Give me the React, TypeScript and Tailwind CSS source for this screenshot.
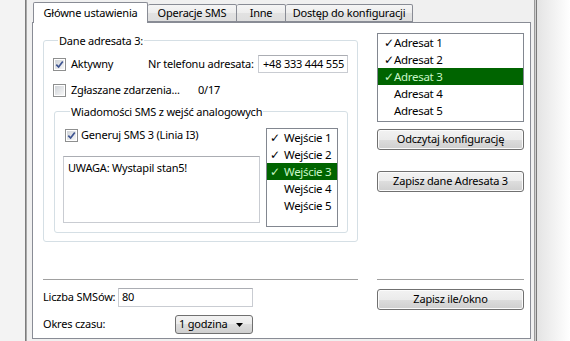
import type { ReactNode } from "react";

const CheckBox = ({ on = false }: { on?: boolean }) => (
  <span className="inline-flex w-[13px] h-[13px] shrink-0 border border-[#8e8f8f] bg-white p-px">
    <span className="flex w-full h-full items-center justify-center bg-linear-to-br from-[#cfd3d8] to-[#f7f7f7]">
      {on && (
        <svg width="9" height="9" viewBox="0 0 9 9">
          <path d="M1.3 4.6 L3.6 7 L7.8 1.4" fill="none" stroke="#3e5491" strokeWidth="1.7" />
        </svg>
      )}
    </span>
  </span>
);

const Button = ({ children, className = "" }: { children: ReactNode; className?: string }) => (
  <button
    className={`h-[21px] w-full rounded-[3px] border border-[#707070] bg-[linear-gradient(#f2f2f2,#ebebeb_50%,#dddddd_50%,#cfcfcf)] shadow-[inset_0_0_0_1px_#fbfbfb] text-black ${className}`}
  >
    {children}
  </button>
);

interface ListProps {
  items: string[];
  checked: number[];
  selected: number;
  wide?: boolean;
}

// listbox items with a check column, one row selected in green
const CheckList = ({ items, checked, selected, wide = false }: ListProps) => (
  <div
    className={
      wide
        ? "w-full h-[89px] border border-[#828790] bg-white"
        : "w-[72px] h-[99px] shrink-0 border border-[#828790] bg-white"
    }
  >
    {items.map((it, i) => (
      <div
        key={it}
        className={`flex h-[17px] items-center text-[11.5px] tracking-[-0.3px] ${wide ? "pl-[6px]" : "pl-[3px]"} ${
          i === selected ? "bg-[#006400] text-[#c9f7c9]" : "text-black"
        }`}
      >
        <span className={`${wide ? "w-[10px]" : "w-[14px]"} font-['DejaVu_Sans',sans-serif] text-[12px] leading-none`}>
          {checked.includes(i) ? "✓" : ""}
        </span>
        <span>{it}</span>
      </div>
    ))}
  </div>
);

const tabs = ["Operacje SMS", "Inne", "Dostęp do konfiguracji"];
const tabW = ["w-[89px]", "w-[49px]", "w-[127px]"];

export default function App() {
  return (
    <div className="flex w-[570px] h-[341px] overflow-hidden bg-[#f0f0f0] font-['Noto_Sans',sans-serif] text-[11px] tracking-[-0.2px] text-black">
      {/* window edge on the left */}
      <div className="w-[25px] bg-[#f3f3f3]" />
      <div className="w-px bg-[#7c7c7c]" />
      <div className="w-px bg-[#a8a8a8]" />
      <div className="w-[5px]" />

      {/* tab control */}
      <div className="flex w-[499px] h-[339px] flex-col pt-[2px]">
        <div className="relative z-10 flex h-[20px] items-end pl-px">
          <div className="flex h-[21px] w-[115px] -mb-px items-center justify-center rounded-t-[2px] border border-b-0 border-[#898c95] bg-white">
            Główne ustawienia
          </div>
          {tabs.map((t, i) => (
            <div
              key={t}
              className={`flex h-[18px] ${tabW[i]} items-center justify-center rounded-t-[2px] border border-l-0 border-[#898c95] bg-[linear-gradient(#f5f5f5,#ededed_50%,#e2e2e2_50%,#dedede)]`}
            >
              {t}
            </div>
          ))}
        </div>

        <div className="flex-1 border border-[#898c95] bg-white pl-[10px] pt-[10px]">
          <div className="flex h-[246px] gap-[19px]">
            {/* Dane adresata */}
            <fieldset className="w-[315px] h-[209px] rounded-[3px] border border-[#d5dfe5] px-[9px]">
              <legend className="ml-[5px] px-px leading-[15px]">Dane adresata 3:</legend>

              <div className="mt-[7px] flex h-[18px] items-center">
                <div className="flex w-[95px] items-center gap-[5px]">
                  <CheckBox on />
                  <span>Aktywny</span>
                </div>
                <span>Nr telefonu adresata:</span>
                <div className="ml-auto flex h-[18px] w-[90px] items-center border border-[#c9ccd2] border-t-[#abadb3] pl-[4px]">
                  +48 333 444 555
                </div>
              </div>

              <div className="mt-[8px] flex h-[18px] items-center gap-[5px]">
                <CheckBox />
                <span className="w-[122px]">Zgłaszane zdarzenia...</span>
                <span>0/17</span>
              </div>

              <fieldset className="ml-px mt-[5px] h-[129px] rounded-[3px] border border-[#d5dfe5] pl-[8px] pr-[9px]">
                <legend className="ml-[7px] px-px leading-[15px]">Wiadomości SMS z wejść analogowych</legend>
                <div className="flex gap-[6px]">
                  <div className="flex flex-1 flex-col">
                    <div className="mt-[7px] flex h-[18px] items-center gap-[3px] pl-[2px]">
                      <CheckBox on />
                      <span>Generuj SMS 3 (Linia I3)</span>
                    </div>
                    <div className="mt-[12px] h-[67px] border border-[#c9ccd2] border-t-[#abadb3] px-[4px] pt-[3px]">
                      UWAGA: Wystapil stan5!
                    </div>
                  </div>
                  <div className="mt-[9px]">
                    <CheckList
                      items={["Wejście 1", "Wejście 2", "Wejście 3", "Wejście 4", "Wejście 5"]}
                      checked={[0, 1, 2]}
                      selected={2}
                    />
                  </div>
                </div>
              </fieldset>
            </fieldset>

            {/* adresaci */}
            <div className="flex w-[147px] flex-col">
              <CheckList
                wide
                items={["Adresat 1", "Adresat 2", "Adresat 3", "Adresat 4", "Adresat 5"]}
                checked={[0, 1, 2]}
                selected={2}
              />
              <Button className="mt-[7px]">Odczytaj konfigurację</Button>
              <Button className="mt-[21px]">Zapisz dane Adresata 3</Button>
            </div>
          </div>

          <div className="flex gap-[19px]">
            <div className="w-[315px]">
              <div className="h-px bg-[#a0a0a0]" />
              <div className="mt-[8px] flex w-[210px] flex-col gap-[8px]">
                <div className="flex h-[19px] items-center justify-between">
                  <span>Liczba SMSów:</span>
                  <div className="flex h-[19px] w-[135px] items-center border border-[#c9ccd2] border-t-[#abadb3] pl-[3px]">
                    80
                  </div>
                </div>
                <div className="flex h-[19px] items-center justify-between">
                  <span>Okres czasu:</span>
                  <div className="flex h-[19px] w-[78px] items-center rounded-[3px] border border-[#707070] bg-[linear-gradient(#f2f2f2,#ebebeb_50%,#dddddd_50%,#cfcfcf)] pl-[3px] pr-[9px]">
                    <span>1 godzina</span>
                    <svg className="ml-auto" width="7" height="4" viewBox="0 0 7 4">
                      <path d="M0 0 H7 L3.5 4 Z" fill="#000" />
                    </svg>
                  </div>
                </div>
              </div>
            </div>
            <div className="w-[147px]">
              <div className="h-px bg-[#a0a0a0]" />
              <Button className="mt-[9px]">Zapisz ile/okno</Button>
            </div>
          </div>
        </div>
      </div>

      {/* window edge on the right */}
      <div className="w-[3px]" />
      <div className="w-px bg-[#9a9a9a]" />
      <div className="w-px bg-[#cfcfcf]" />
      <div className="w-px bg-[#7a7a7a]" />
      <div className="flex-1 bg-linear-to-r from-[#e4e4e4] to-[#ffffff]" />
    </div>
  );
}
